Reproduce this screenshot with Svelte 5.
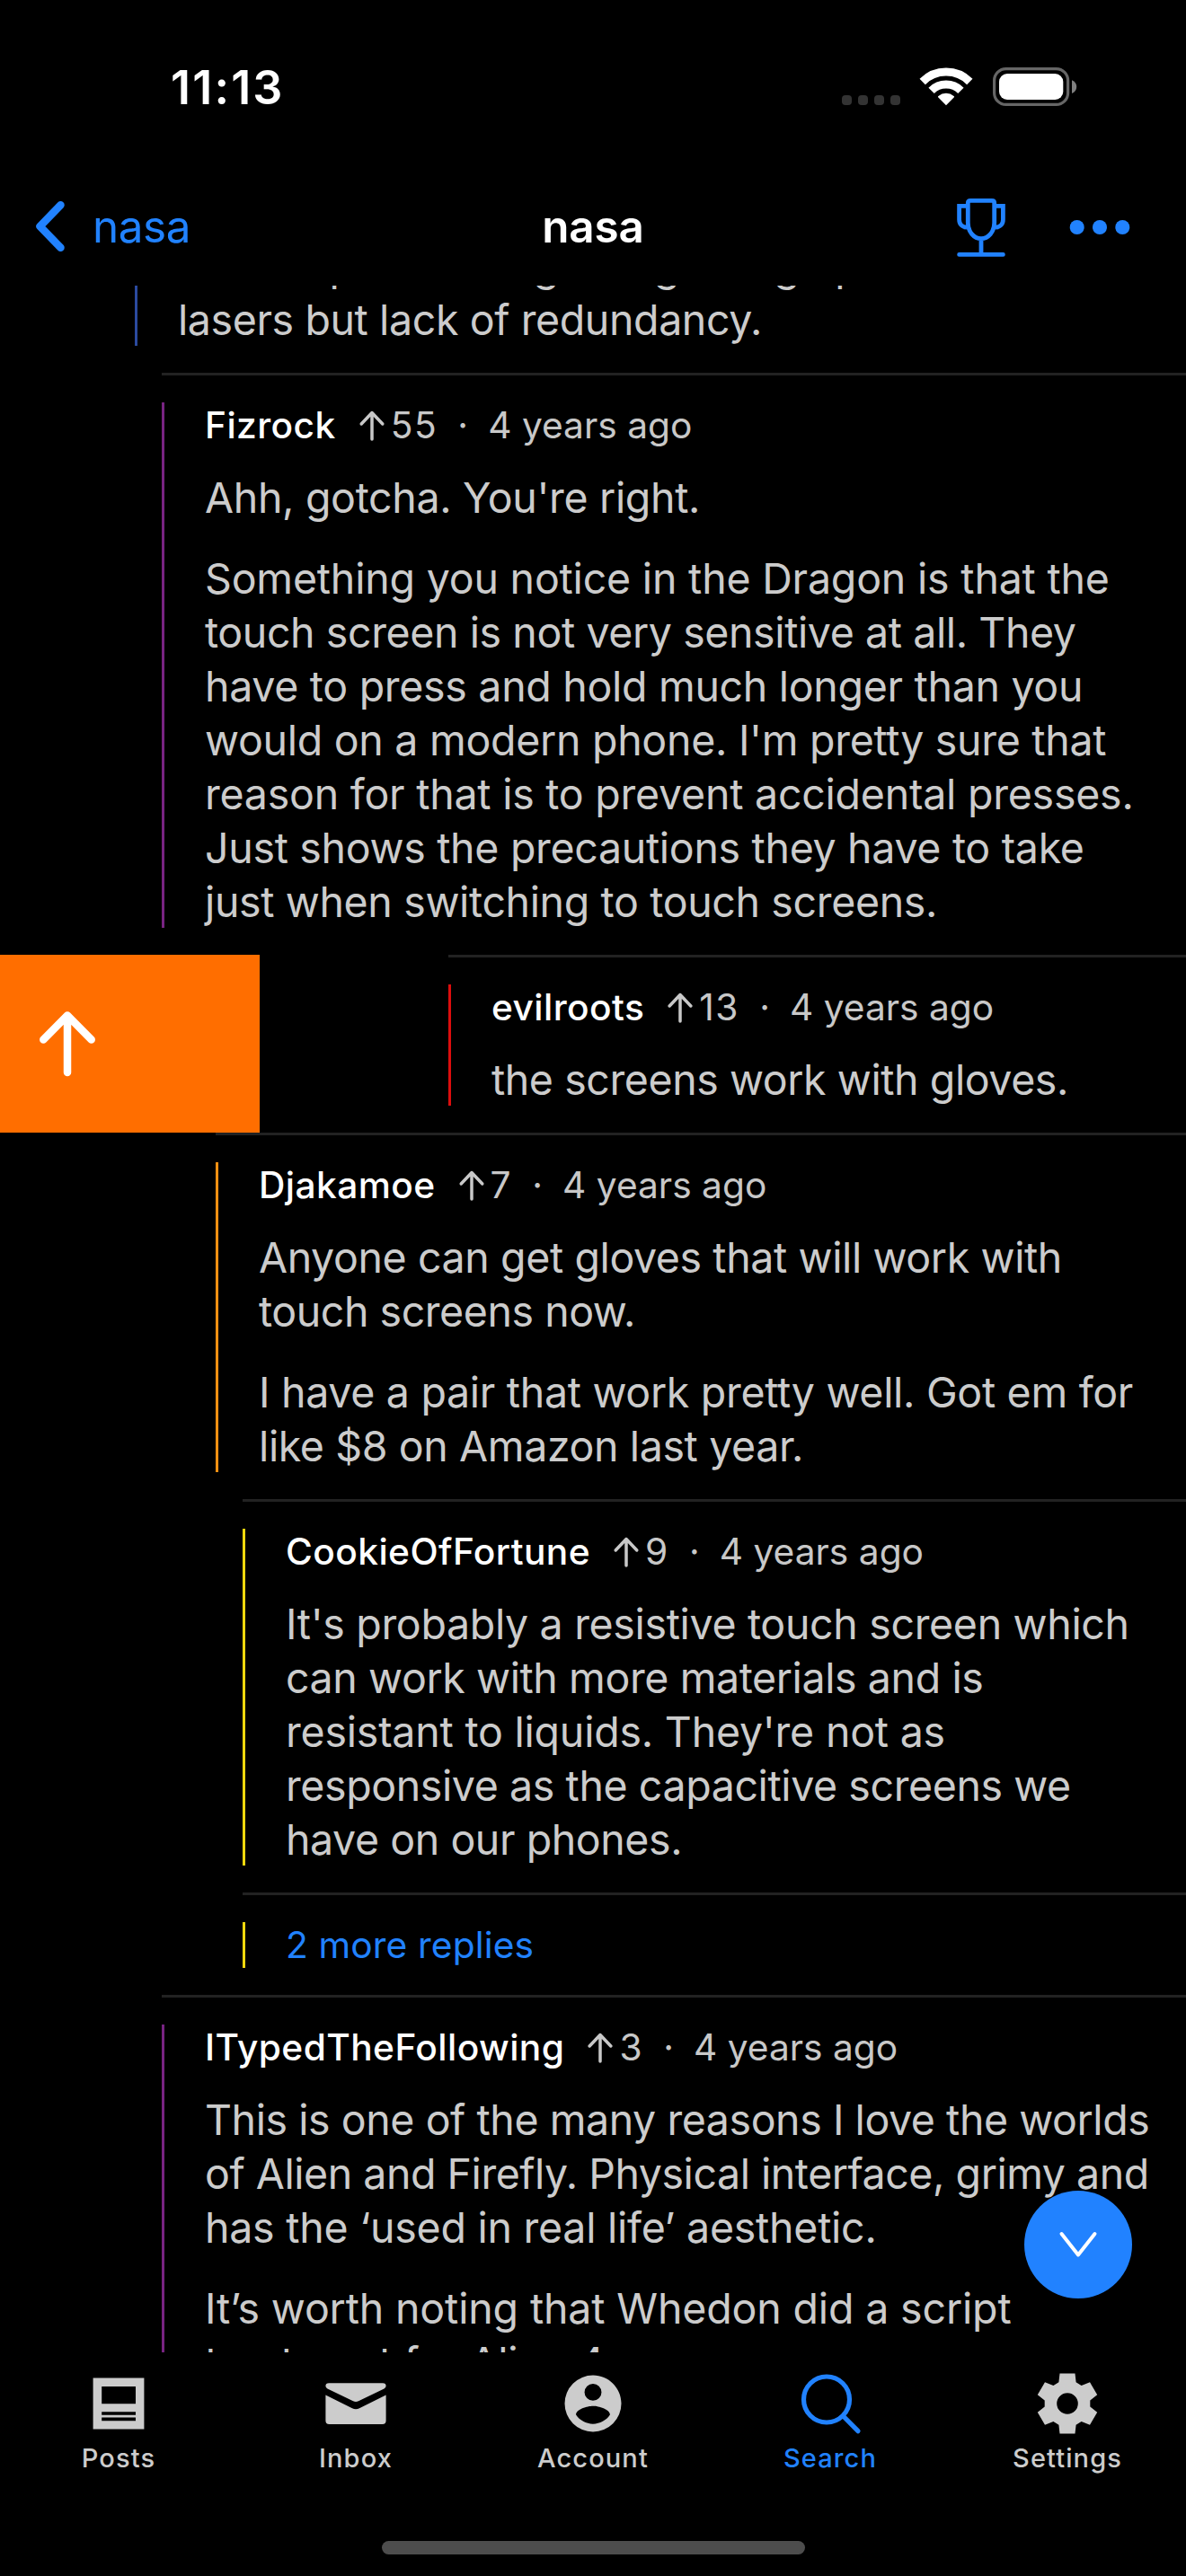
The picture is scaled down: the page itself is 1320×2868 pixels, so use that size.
<script>
  const comments = [
    {
      indent: 150, color: '#2b4a9f', clipped: true,
      body: [[['smaller parts letting doing being up', -0.4], ['lasers but lack of redundancy.', -0.39]]],
    },
    {
      indent: 180, color: '#782482', author: 'Fizrock', score: 55, age: '4 years ago',
      body: [
        [["Ahh, gotcha. You're right.", -0.33]],
        [
          ['Something you notice in the Dragon is that the', -0.19],
          ['touch screen is not very sensitive at all. They', -0.4],
          ['have to press and hold much longer than you', -0.3],
          ["would on a modern phone. I'm pretty sure that", -0.28],
          ['reason for that is to prevent accidental presses.', -0.23],
          ['Just shows the precautions they have to take', -0.31],
          ['just when switching to touch screens.', -0.36],
        ],
      ],
    },
    {
      indent: 210, color: '#dd0d0d', author: 'evilroots', score: 13, age: '4 years ago', swiped: true,
      body: [[['the screens work with gloves.', -0.42]]],
    },
    {
      indent: 240, color: '#ff9112', author: 'Djakamoe', score: 7, age: '4 years ago',
      body: [
        [['Anyone can get gloves that will work with', -0.39], ['touch screens now.', -0.45]],
        [['I have a pair that work pretty well. Got em for', -0.3], ['like $8 on Amazon last year.', -0.38]],
      ],
    },
    {
      indent: 270, color: '#f0d80c', author: 'CookieOfFortune', score: 9, age: '4 years ago',
      body: [[
        ["It's probably a resistive touch screen which", -0.33],
        ['can work with more materials and is', -0.4],
        ["resistant to liquids. They're not as", -0.21],
        ['responsive as the capacitive screens we', -0.4],
        ['have on our phones.', -0.42],
      ]],
    },
    { indent: 270, color: '#f0d80c', more: '2 more replies' },
    {
      indent: 180, color: '#782482', author: 'ITypedTheFollowing', score: 3, age: '4 years ago',
      body: [
        [
          ['This is one of the many reasons I love the worlds', -0.43],
          ['of Alien and Firefly. Physical interface, grimy and', -0.46],
          ['has the ‘used in real life’ aesthetic.', -0.25],
        ],
        [['It’s worth noting that Whedon did a script', -0.15], ['treatment for Alien 4', -0.3]],
      ],
    },
  ];
  const tabs = ['Posts', 'Inbox', 'Account', 'Search', 'Settings'];
</script>

<div class="screen">
  <div class="status">
    <span class="time">11:13</span>
    <div class="indicators">
      <div class="signal"><i></i><i></i><i></i><i></i></div>
      <svg class="wifi" width="60" height="43" viewBox="0 0 60 43">
        <path d="M3.7 16A37.2 37.2 0 0 1 56.3 16M13.6 25.9A23.2 23.2 0 0 1 46.4 25.9" fill="none" stroke="#fff" stroke-width="9" />
        <path d="M30 42.3L21.1 33.2Q20.6 32.4 21.4 31.9A13.5 13.5 0 0 1 38.6 31.9Q39.4 32.4 38.9 33.2Z" fill="#fff" />
      </svg>
      <svg width="94" height="43" viewBox="0 0 94 43">
        <rect x="1.6" y="1.6" width="82" height="39.8" rx="13" fill="none" stroke="#666" stroke-width="3.2" />
        <rect x="7" y="7" width="71.3" height="29" rx="9" fill="#fff" />
        <path d="M88 14.2C91.4 15.4 93.2 18.3 93.2 21.6C93.2 25 91.4 27.8 88 29Z" fill="#808080" />
      </svg>
    </div>
  </div>

  <header>
    <div class="back">
      <svg width="36" height="60" viewBox="0 0 36 60"><path d="M29.5 6.2L6.5 30L29.5 53.8" fill="none" stroke="#2182ff" stroke-width="8.5" stroke-linecap="round" stroke-linejoin="round" /></svg>
      <span>nasa</span>
    </div>
    <h1>nasa</h1>
    <div class="actions">
      <svg width="56" height="66" viewBox="0 0 56 66" fill="none" stroke="#2182ff" stroke-width="4.8" stroke-linecap="round">
        <path d="M13.3 28V6Q13.3 3.3 16 3.3H40Q42.7 3.3 42.7 6V28C42.7 38 36 45.7 28 45.7C20 45.7 13.3 38 13.3 28ZM28 46V63M3.6 63.4H52.4" />
        <path d="M13.3 9.3H3.6V24.5C3.6 29.5 7 33 12 33.2M42.7 9.3H52.4V24.5C52.4 29.5 49 33 44 33.2" stroke-linecap="butt" />
      </svg>
      <svg width="68" height="18" viewBox="0 0 68 18" fill="#2182ff"><circle cx="8.7" cy="9" r="8" /><circle cx="34" cy="9" r="8" /><circle cx="59.3" cy="9" r="8" /></svg>
    </div>
  </header>

  <main>
    {#each comments as c}
      <article class:clipped={c.clipped}>
        {#if c.swiped}
          <div class="swipe">
            <svg width="66" height="74" viewBox="0 0 66 74" fill="none" stroke="#fff" stroke-width="8.5" stroke-linecap="round" stroke-linejoin="round"><path d="M33 69V5.5M6.3 32.5L33 5.5L59.7 32.5" /></svg>
          </div>
        {/if}
        <div class="item" style:margin-left="{c.indent}px">
          <div class="thread" style:border-color={c.color}>
            {#if c.more}
              <span class="more">{c.more}</span>
            {:else}
              {#if c.author}
                <div class="meta">
                  <strong>{c.author}</strong>
                  <svg width="30" height="36" viewBox="0 0 30 36" fill="none" stroke="#c8c8c8" stroke-width="3.5" stroke-linecap="round" stroke-linejoin="round"><path d="M15 33V3.5M3.2 16L15 3.5L26.8 16" /></svg>
                  <span class="score">{c.score}</span>
                  <span class="dot">·</span>
                  <span>{c.age}</span>
                </div>
              {/if}
              <div class="body">
                {#each c.body as para}
                  <p>{#each para as [text, tracking]}<span class="line" style:letter-spacing="{tracking}px">{text}</span>{/each}</p>
                {/each}
              </div>
            {/if}
          </div>
        </div>
      </article>
    {/each}
  </main>

  <button class="next" aria-label="Next comment">
    <svg width="48" height="34" viewBox="0 0 48 34" fill="none" stroke="#fff" stroke-width="4" stroke-linecap="round" stroke-linejoin="round"><path d="M5.5 5L24 28.5L42.5 5" /></svg>
  </button>

  <nav>
    {#each tabs as tab}
      <div class="tab" class:active={tab === 'Search'}>
        <svg width="76" height="76" viewBox="-38 -38 76 76">
          {#if tab === 'Posts'}
            <path fill-rule="evenodd" d="M-28.4-28.5H28.4V28.5H-28.4ZM-18.8-19V.3H19V-19ZM-18.8 9.2V12.7H19V9.2ZM-18.8 15.6V19.3H19V15.6Z" />
          {:else if tab === 'Inbox'}
            <path d="M-33.6-19.5Q-33.6-22.7-30-22.7H30Q33.6-22.7 33.6-19.5Q33.6-18 31.5-16.5L3-2.7Q0-1.2-3-2.7L-31.5-16.5Q-33.6-18-33.6-19.5Z" />
            <path d="M-33.6-9.5L-4 5.2Q0 7.3 4 5.2L33.6-9.5V19Q33.6 23 29.6 23H-29.6Q-33.6 23-33.6 19Z" />
          {:else if tab === 'Account'}
            <path transform="scale(3.15) translate(-12 -12)" d="M12 19.2C9.5 19.2 7.29 17.92 6 16C6.03 14 10 12.9 12 12.9C14 12.9 17.97 14 18 16C16.71 17.92 14.5 19.2 12 19.2M12 5A3 3 0 0 1 15 8A3 3 0 0 1 12 11A3 3 0 0 1 9 8A3 3 0 0 1 12 5M12 2A10 10 0 0 0 2 12A10 10 0 0 0 12 22A10 10 0 0 0 22 12C22 6.47 17.5 2 12 2Z" />
          {:else if tab === 'Search'}
            <g fill="none" stroke="#2182ff" stroke-width="5.2" stroke-linecap="round"><circle cx="-4" cy="-4.5" r="25.5" /><path d="M14.5 14L31 30.7" /></g>
          {:else}
            <path fill-rule="evenodd" d="M-8.5-33.5H8.5L9.6-23.7L15.6-20L25-23.7L33.2-9.7L25.3-3.5V3.5L33.2 9.7L25 23.7L15.6 20L9.6 23.7L8.5 33.5H-8.5L-9.6 23.7L-15.6 20L-25 23.7L-33.2 9.7L-25.3 3.5V-3.5L-33.2-9.7L-25-23.7L-15.6-20L-9.6-23.7ZM0-11.8A11.8 11.8 0 0 0 0 11.8A11.8 11.8 0 0 0 0-11.8Z" />
          {/if}
        </svg>
        <span>{tab}</span>
      </div>
    {/each}
  </nav>
  <div class="home"></div>
</div>

<style>
  :global(body) { margin: 0; background: #000; }
  .screen {
    position: relative;
    display: flex;
    flex-direction: column;
    width: 1320px;
    height: 2868px;
    overflow: hidden;
    background: #000;
    color: #ccc;
    font-family: Inter, "Liberation Sans", sans-serif;
  }
  .status {
    box-sizing: border-box;
    height: 190px;
    padding: 66px 121px 0 190px;
    display: flex;
    justify-content: space-between;
    align-items: flex-start;
  }
  .time { font-size: 52px; line-height: 64px; font-weight: 600; letter-spacing: 2.2px; color: #fff; }
  .indicators { display: flex; padding-top: 9px; }
  .signal { display: flex; gap: 7px; padding-top: 31px; margin-right: 21px; }
  .signal i { width: 11px; height: 11px; border-radius: 4px; background: #333; }
  .wifi { margin-right: 22px; }

  header {
    height: 128px;
    box-sizing: border-box;
    padding-bottom: 4px;
    display: grid;
    grid-template-columns: 1fr auto 1fr;
    align-items: center;
  }
  .back { display: flex; align-items: center; gap: 29px; padding-left: 38px; color: #2182ff; font-size: 49.4px; line-height: 60px; letter-spacing: -0.43px; }
  h1 { margin: 0; font-size: 49.4px; line-height: 60px; font-weight: 600; color: #fff; letter-spacing: -0.17px; }
  .actions { display: flex; align-items: center; justify-content: flex-end; gap: 70px; padding: 2px 62px 0 0; }

  main { height: 2301px; overflow: hidden; }
  article { display: flex; }
  .item { flex: 1; min-width: 0; border-top: 3px solid #222; padding: 30px 0; }
  .thread { display: flow-root; border-left: 3px solid; padding-left: 45px; }
  .clipped { height: 97px; }
  .clipped .item { border-top: 0; padding-top: 0; }
  .clipped .thread { height: 67px; display: flex; flex-direction: column; justify-content: flex-end; }
  .clipped .body { padding-top: 0; }
  .swipe { width: 289px; box-sizing: border-box; padding-left: 42px; display: flex; align-items: center; background: #ff6e00; }
  .meta { display: flex; align-items: center; height: 51px; font-size: 40.7px; line-height: 51px; color: #c8c8c8; white-space: nowrap; }
  .meta strong { font-weight: 500; color: #fff; letter-spacing: 0.42px; margin-right: 25px; }
  .score { margin-left: 6px; letter-spacing: 1.5px; }
  .dot { width: 56px; text-align: center; }
  .body { padding-top: 25px; margin-bottom: -1px; }
  p { margin: 0 0 30px; font-size: 46.5px; line-height: 60px; white-space: nowrap; }
  p:last-child { margin-bottom: 0; }
  .line { display: block; }
  .more { display: block; height: 51px; font-size: 40.7px; line-height: 51px; letter-spacing: 0.13px; color: #2182ff; }

  .next {
    position: absolute;
    left: 1140px;
    top: 2439px;
    width: 120px;
    height: 120px;
    padding: 0;
    border: 0;
    border-radius: 50%;
    background: #2182ff;
    display: grid;
    place-items: center;
  }

  nav { display: flex; height: 210px; }
  .tab { width: 264px; box-sizing: border-box; padding-top: 18.5px; display: flex; flex-direction: column; align-items: center; fill: #ccc; font-size: 29px; line-height: 36px; font-weight: 500; letter-spacing: 1.1px; }
  .tab span { margin-top: 5px; }
  .active { color: #2182ff; }
  .home { width: 471px; height: 15px; margin: 0 auto; border-radius: 8px; background: #4d4d4d; }
</style>
